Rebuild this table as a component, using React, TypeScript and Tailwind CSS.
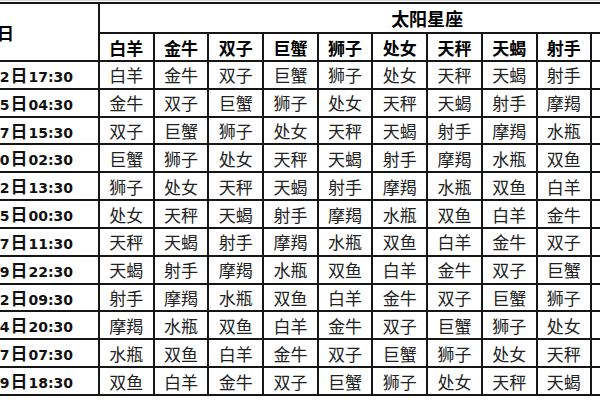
import React from "react";

const SIGNS = ["白羊", "金牛", "双子", "巨蟹", "狮子", "处女", "天秤", "天蝎", "射手", "摩羯", "水瓶", "双鱼"];
const DATES: [string, string][] = [
  ["1月2", "17:30"],
  ["1月5", "04:30"],
  ["1月7", "15:30"],
  ["1月10", "02:30"],
  ["1月12", "13:30"],
  ["1月15", "00:30"],
  ["1月17", "11:30"],
  ["1月19", "22:30"],
  ["1月22", "09:30"],
  ["1月24", "20:30"],
  ["1月27", "07:30"],
  ["1月29", "18:30"],
];

const cjk = { fontFamily: '"Noto Sans CJK SC", "Noto Sans", sans-serif' };

export default function App() {
  return (
    <div className="w-[600px] h-[400px] overflow-hidden bg-white">
      <div className="h-[1px] bg-[#d8d8d8]" />
      <div className="h-[1px] bg-white" />
      <div
        className="ml-[-40px] w-max grid grid-cols-[136px_repeat(12,52.7px)] grid-rows-[28px_26px_repeat(12,25.83px)] gap-[2px] p-[2px] bg-[#161616]"
        style={cjk}
      >
        <div className="row-span-2 bg-white flex items-center justify-end pr-[84px] overflow-hidden">
          <span className="text-[17px] font-bold text-black whitespace-nowrap leading-none">出生日</span>
        </div>
        <div className="col-span-12 bg-white flex items-center justify-center">
          <span className="text-[18px] font-bold text-black leading-none">太阳星座</span>
        </div>
        {SIGNS.map((s) => (
          <div key={"h" + s} className="bg-white flex items-center justify-center">
            <span className="text-[17px] font-bold text-black leading-none">{s}</span>
          </div>
        ))}
        {DATES.map(([d, t], i) => (
          <React.Fragment key={i}>
            <div className="bg-white flex items-center justify-end pr-[25px] overflow-hidden whitespace-nowrap">
              <span
                className="text-[14px] font-bold text-[#111] leading-none"
                style={{ fontFamily: '"DejaVu Sans", "Noto Sans CJK SC", sans-serif' }}
              >
                {d}
                <span className="text-[17px] mx-[1px]" style={cjk}>日</span>
                {t}
              </span>
            </div>
            {SIGNS.map((_, j) => (
              <div key={j} className="bg-white flex items-center justify-center">
                <span className="text-[17px] text-[#222] leading-none">{SIGNS[(i + j) % 12]}</span>
              </div>
            ))}
          </React.Fragment>
        ))}
      </div>
    </div>
  );
}
